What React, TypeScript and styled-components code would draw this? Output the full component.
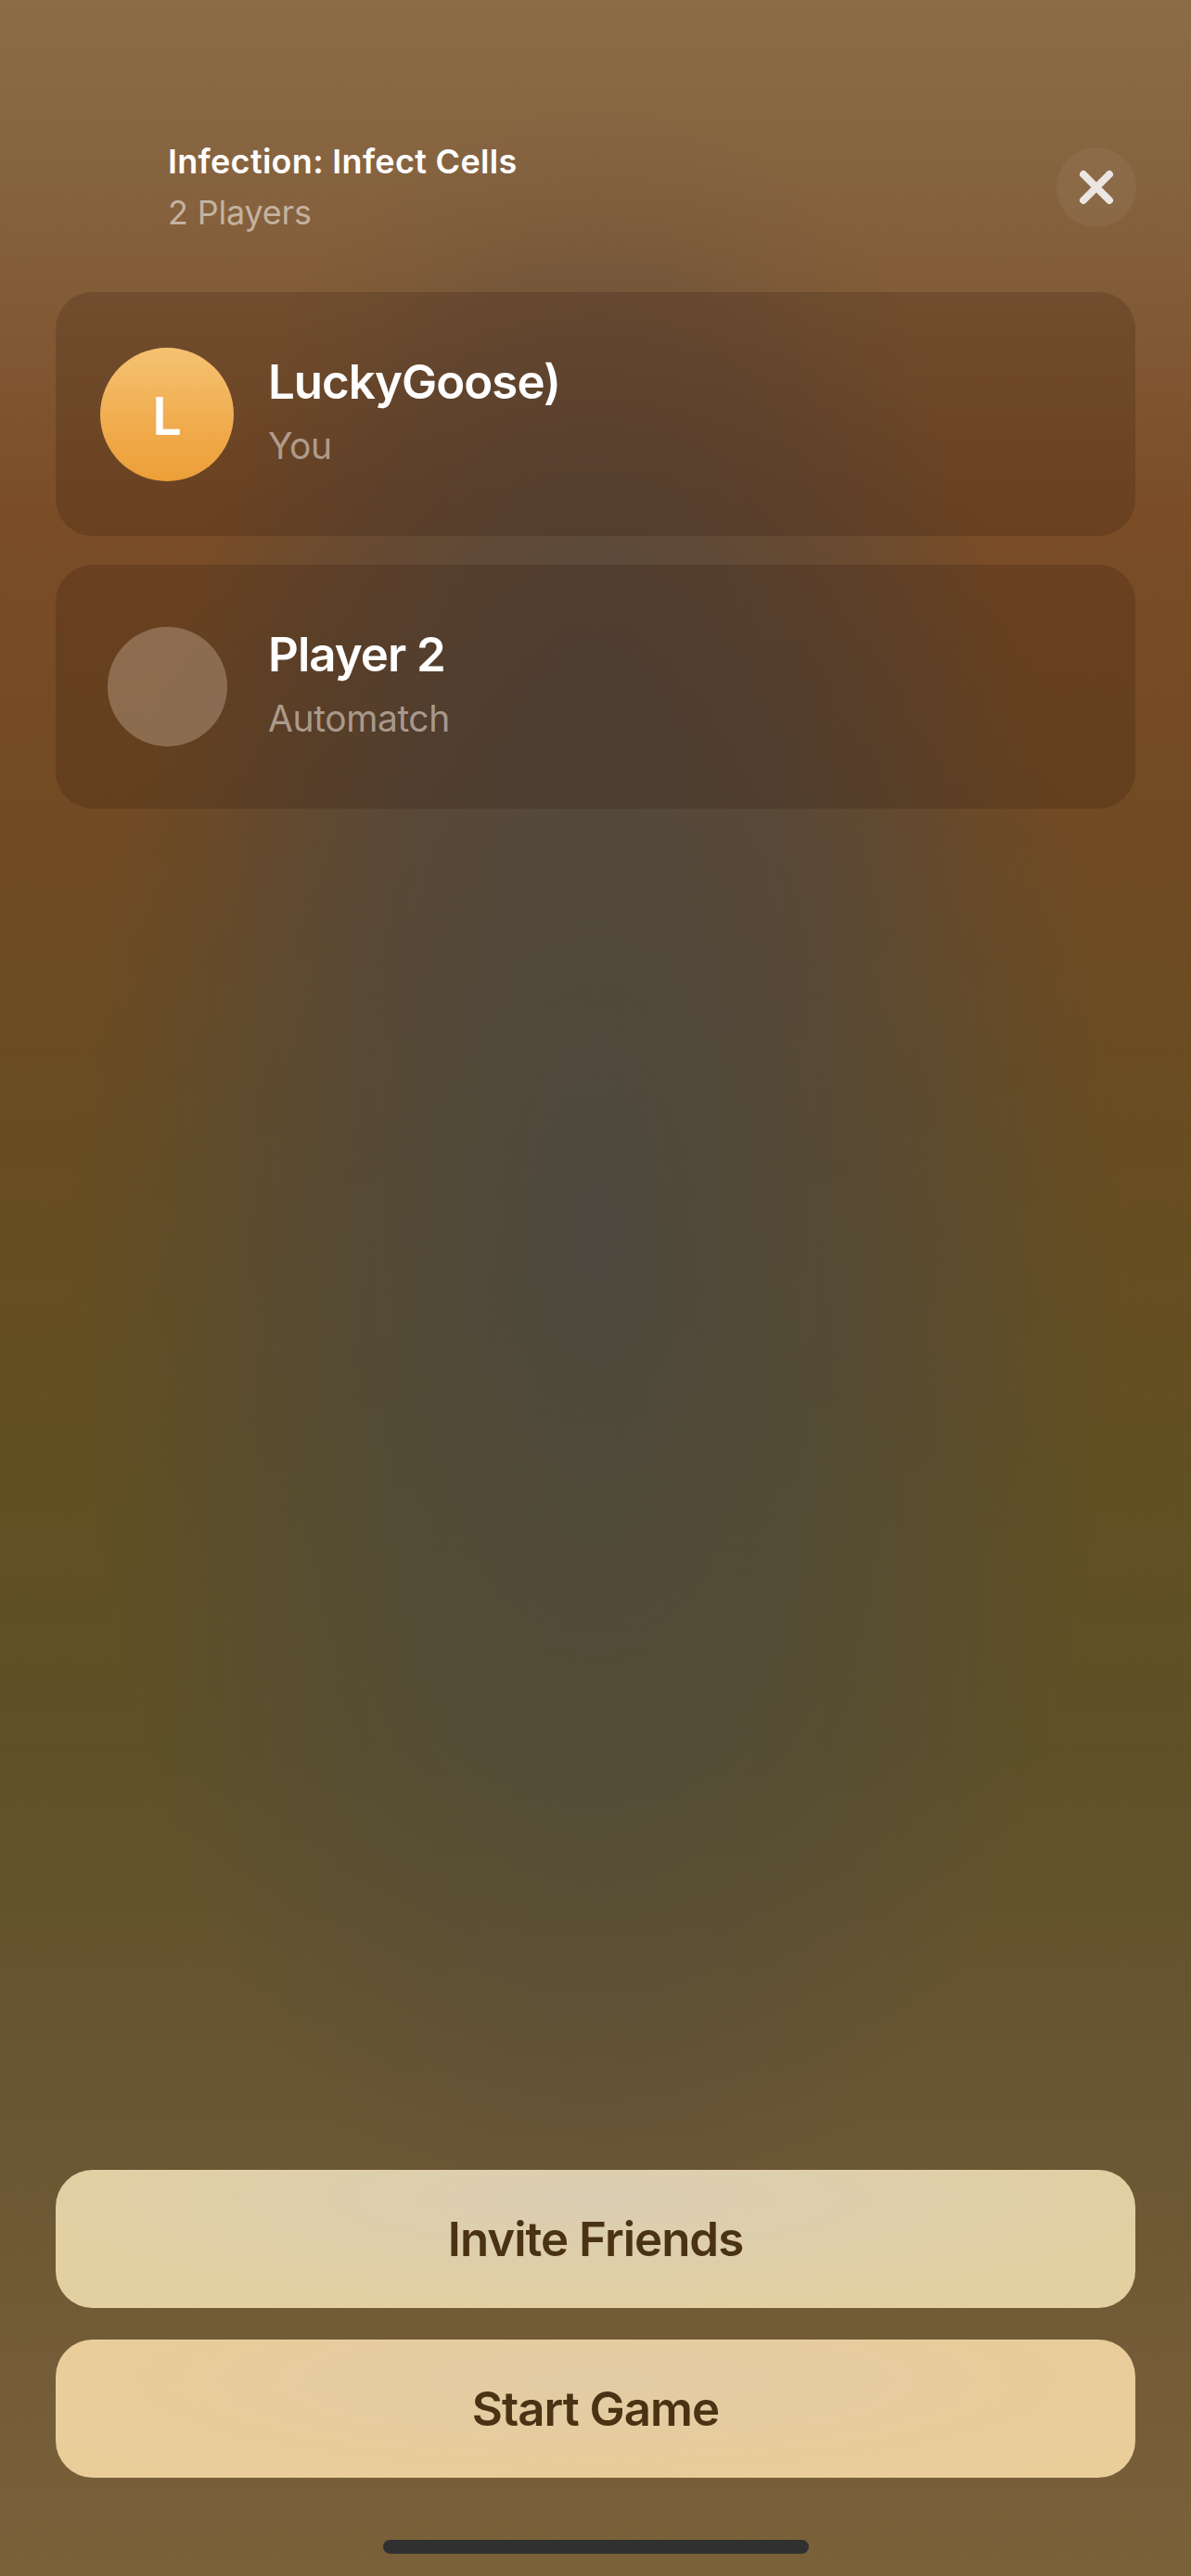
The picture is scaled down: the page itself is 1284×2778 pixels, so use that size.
import React from "react";
import styled, { createGlobalStyle } from "styled-components";

const GlobalStyle = createGlobalStyle`
  html, body {
    margin: 0;
    padding: 0;
    background: #7a5a38;
  }
  * { box-sizing: border-box; }
  body {
    font-family: Inter, "Noto Sans", "Liberation Sans", sans-serif;
    -webkit-font-smoothing: antialiased;
  }
`;

const Screen = styled.div`
  width: 1284px;
  height: 2778px;
  display: flex;
  flex-direction: column;
  padding: 153px 60px 24px;
  background:
    radial-gradient(ellipse 44% 40% at 50% 48%, rgba(74, 72, 66, 0.9) 0%, rgba(74, 72, 66, 0.55) 50%, rgba(74, 72, 66, 0) 100%),
    radial-gradient(ellipse 34% 22% at 50% 26%, rgba(84, 70, 64, 0.6) 0%, rgba(84, 70, 64, 0) 100%),
    linear-gradient(180deg, #8c6b47 0%, #86633f 7%, #7a4d27 20%, #714a23 32%, #684d21 45%, #615022 58%, #5e5128 68%, #6a5633 82%, #7b613a 100%);
`;

const Header = styled.header`
  display: flex;
  align-items: center;
  justify-content: space-between;
  padding-left: 121px;
  margin-bottom: 64px;
`;

const HeaderText = styled.div`
  display: flex;
  flex-direction: column;
  gap: 12px;
`;

const Title = styled.div`
  font-size: 36px;
  line-height: 43px;
  font-weight: 600;
  color: #ffffff;
  letter-spacing: 0.3px;
`;

const Subtitle = styled.div`
  font-size: 36px;
  line-height: 43px;
  font-weight: 400;
  color: rgba(225, 215, 205, 0.7);
  letter-spacing: -0.2px;
`;

const CloseButton = styled.button`
  width: 86px;
  height: 86px;
  margin-right: -1px;
  border: none;
  border-radius: 50%;
  background: rgba(255, 255, 255, 0.05);
  display: flex;
  align-items: center;
  justify-content: center;
  padding: 0;
  cursor: pointer;
`;

const PlayerList = styled.div`
  display: flex;
  flex-direction: column;
  gap: 31px;
`;

const PlayerCard = styled.div`
  height: 263px;
  border-radius: 40px;
  background: rgba(45, 22, 10, 0.2);
  display: flex;
  align-items: center;
  padding: 0 48px;
  gap: 38px;
`;

const AvatarSlot = styled.div`
  width: 144px;
  height: 144px;
  display: flex;
  align-items: center;
  justify-content: center;
  flex-shrink: 0;
`;

const Avatar = styled.div<{ $size: number; $filled?: boolean }>`
  width: ${(p) => p.$size}px;
  height: ${(p) => p.$size}px;
  border-radius: 50%;
  display: flex;
  align-items: center;
  justify-content: center;
  background: ${(p) =>
    p.$filled
      ? "linear-gradient(180deg, #f5c272 0%, #f0ab4c 60%, #ec9f38 100%)"
      : "rgba(255, 235, 215, 0.26)"};
  color: #ffffff;
  font-size: 56px;
  font-weight: 600;
  line-height: 1;
  padding-top: 4px;
`;

const PlayerText = styled.div`
  display: flex;
  flex-direction: column;
  gap: 15px;
  padding-bottom: 8px;
  margin-left: -1px;
`;

const PlayerName = styled.div`
  font-size: 51px;
  line-height: 61px;
  font-weight: 600;
  color: #ffffff;
  letter-spacing: -1px;
`;

const PlayerStatus = styled.div`
  font-size: 39px;
  line-height: 47px;
  font-weight: 400;
  color: rgba(225, 215, 205, 0.62);
  letter-spacing: -0.4px;
`;

const Spacer = styled.div`
  flex: 1;
`;

const Actions = styled.div`
  display: flex;
  flex-direction: column;
  gap: 34px;
  margin-bottom: 67px;
`;

const ActionButton = styled.button<{ $tone: "invite" | "start" }>`
  height: 149px;
  width: 100%;
  border: none;
  border-radius: 40px;
  background: ${(p) =>
    p.$tone === "invite"
      ? "radial-gradient(ellipse 60% 90% at 50% 20%, #dbcdb2 0%, #dfcfa8 60%, #e3d0a0 100%)"
      : "radial-gradient(ellipse 60% 90% at 50% 30%, #e2cca6 0%, #e7cc9c 60%, #eace9a 100%)"};
  color: #4a3214;
  font-family: Inter, "Noto Sans", "Liberation Sans", sans-serif;
  font-size: 51px;
  line-height: 61px;
  font-weight: 600;
  letter-spacing: -1px;
  display: flex;
  align-items: center;
  justify-content: center;
  padding: 0;
  cursor: pointer;
`;

const HomeIndicator = styled.div`
  align-self: center;
  width: 459px;
  height: 15px;
  border-radius: 8px;
  background: #303030;
`;

const CloseIcon = () => (
  <svg width="40" height="40" viewBox="0 0 40 40" aria-hidden="true">
    <path
      d="M6 6 L34 34 M34 6 L6 34"
      stroke="#ebe6e2"
      strokeWidth="8"
      strokeLinecap="round"
      fill="none"
    />
  </svg>
);

type Player = {
  name: string;
  status: string;
  initial?: string;
};

const players: Player[] = [
  { name: "LuckyGoose)", status: "You", initial: "L" },
  { name: "Player 2", status: "Automatch" },
];

export default function App() {
  return (
    <>
      <GlobalStyle />
      <Screen>
        <Header>
          <HeaderText>
            <Title>Infection: Infect Cells</Title>
            <Subtitle>2 Players</Subtitle>
          </HeaderText>
          <CloseButton aria-label="Close">
            <CloseIcon />
          </CloseButton>
        </Header>
        <PlayerList>
          {players.map((p) => (
            <PlayerCard key={p.name}>
              <AvatarSlot>
                {p.initial ? (
                  <Avatar $size={144} $filled>
                    {p.initial}
                  </Avatar>
                ) : (
                  <Avatar $size={129} />
                )}
              </AvatarSlot>
              <PlayerText>
                <PlayerName>{p.name}</PlayerName>
                <PlayerStatus>{p.status}</PlayerStatus>
              </PlayerText>
            </PlayerCard>
          ))}
        </PlayerList>
        <Spacer />
        <Actions>
          <ActionButton $tone="invite">Invite Friends</ActionButton>
          <ActionButton $tone="start">Start Game</ActionButton>
        </Actions>
        <HomeIndicator />
      </Screen>
    </>
  );
}
